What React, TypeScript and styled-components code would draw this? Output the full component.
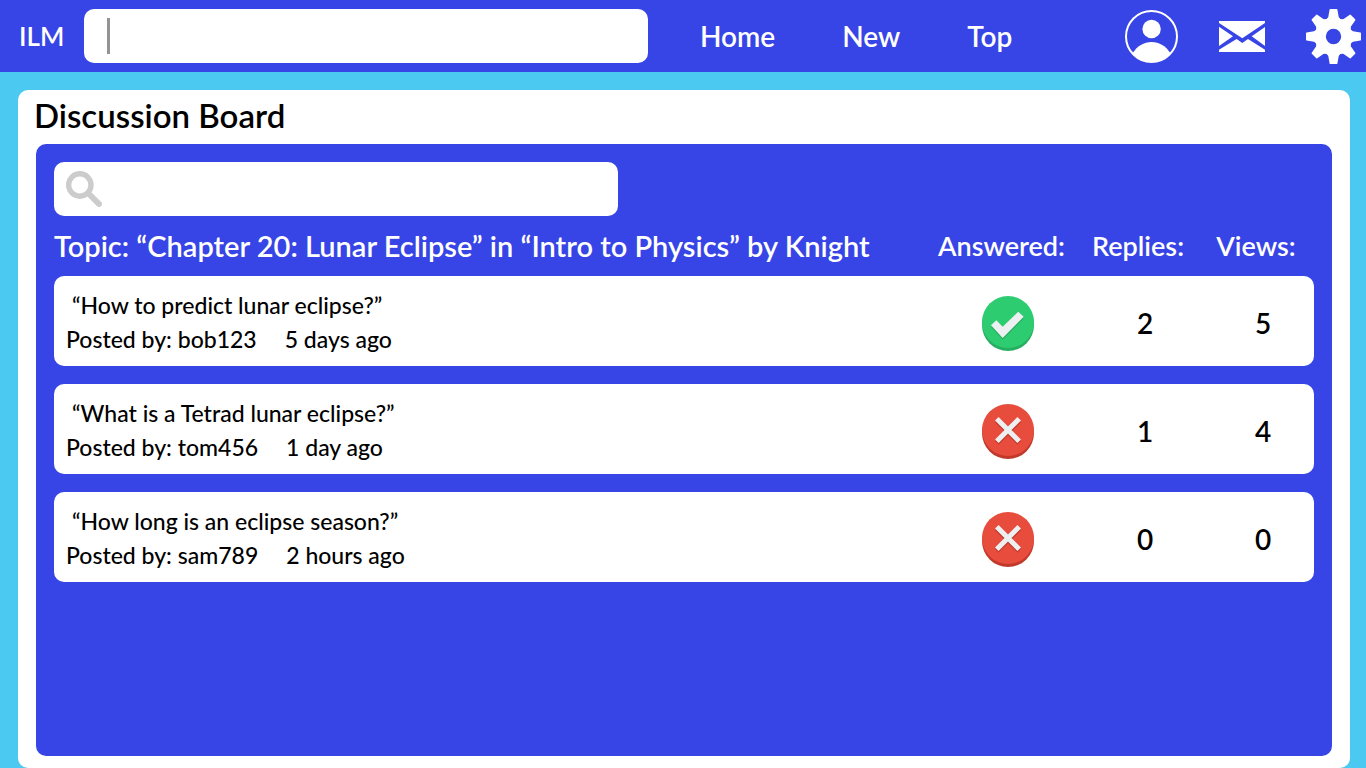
import React from "react";
import styled, { createGlobalStyle } from "styled-components";

const blue = "#3845e6";

const GlobalStyle = createGlobalStyle`
  * { box-sizing: border-box; }
  body {
    margin: 0;
    background: #4bc9f0;
    color: #000;
    font-family: Lato, "Noto Sans", sans-serif;
    font-weight: 500;
  }
`;

const Page = styled.div`
  min-height: 100vh;
  display: flex;
  flex-direction: column;
`;

const Header = styled.header`
  display: flex;
  align-items: center;
  height: 72px;
  padding: 0 5px 0 19px;
  background: ${blue};
  color: #fff;
`;

const Brand = styled.a`
  flex: 0 0 65px;
  color: inherit;
  font-size: 26px;
  font-weight: 600;
  line-height: 36px;
  text-decoration: none;
`;

const Field = styled.label<{ $inset: number }>`
  display: flex;
  align-items: center;
  flex: 0 1 564px;
  width: 100%;
  max-width: 564px;
  height: 54px;
  padding: 0 ${(p) => p.$inset}px;
  border-radius: 10px;
  background: #fff;
`;

const Caret = styled.span`
  width: 3px;
  height: 36px;
  background: #939393;
`;

const Input = styled.input`
  flex: 1;
  min-width: 0;
  height: 36px;
  margin-left: 8px;
  padding: 0;
  border: 0;
  outline: 0;
  background: transparent;
  color: #000;
  font: inherit;
  font-size: 23px;
`;

const Nav = styled.nav`
  display: flex;
  gap: 67px;
  margin-left: 52px;
`;

const NavLink = styled.a`
  color: inherit;
  font-size: 28px;
  font-weight: 600;
  line-height: 38px;
  text-decoration: none;
`;

const Actions = styled.div`
  display: flex;
  align-items: center;
  gap: 41px;
  margin-left: auto;
`;

const IconButton = styled.button`
  display: block;
  padding: 0;
  border: 0;
  background: none;
  color: inherit;
  cursor: pointer;

  svg { display: block; }
`;

const Board = styled.main`
  flex: 1;
  display: flex;
  flex-direction: column;
  margin: 18px 16px 0 18px;
  padding: 0 18px 12px;
  border-radius: 10px;
  background: #fff;
`;

const Title = styled.h1`
  margin: 0 -2px 4px;
  font-size: 33px;
  font-weight: 600;
  line-height: 50px;
`;

const Panel = styled.section`
  flex: 1;
  padding: 18px;
  border-radius: 10px;
  background: ${blue};
`;

const Topics = styled.table`
  width: 100%;
  table-layout: fixed;
  border-collapse: separate;
  border-spacing: 0 18px;
`;

const TopicHeading = styled.th`
  padding: 0;
  color: #fff;
  font-size: 29px;
  font-weight: 600;
  line-height: 24px;
  text-align: left;
  white-space: nowrap;
`;

const ColumnHeading = styled(TopicHeading)<{ $width: number }>`
  width: ${(p) => p.$width}px;
  padding-right: 14px;
  font-size: 27px;
  text-align: center;
`;

const Cell = styled.td`
  height: 90px;
  padding: 4px 0 0;
  background: #fff;
  font-size: 28px;
  font-weight: 600;
  line-height: 36px;
  text-align: center;
  vertical-align: middle;

  svg { display: block; margin: 0 auto; }

  &:last-child { border-radius: 0 10px 10px 0; }
`;

const QuestionCell = styled(Cell)`
  padding: 2px 12px 0;
  border-radius: 10px 0 0 10px;
  font-size: 23px;
  font-weight: 500;
  line-height: 34px;
  text-align: left;
`;

const Question = styled.a`
  display: block;
  padding-left: 6px;
  color: inherit;
  text-decoration: none;
`;

const Meta = styled.div`
  display: flex;
  gap: 28px;
`;

const UserIcon = () => (
  <svg width="53" height="53" viewBox="0 0 53 53" aria-hidden="true">
    <circle cx="26.5" cy="26.5" r="25.5" fill="none" stroke="#fff" strokeWidth="2" />
    <circle cx="26.6" cy="19" r="9.2" fill="#fff" />
    <path d="M7.4 43.4C12 36 19 31.9 26.6 31.9S41 36 45.6 43.4A25.5 25.5 0 0 1 7.4 43.4Z" fill="#fff" />
  </svg>
);

const MailIcon = () => (
  <svg width="46" height="31" viewBox="0 0 46 31" fill="#fff" aria-hidden="true">
    <path d="M0 0H46V2L23.3 17.3L0 2Z" />
    <path d="M0 5.8L14 15.3L0 25Z" />
    <path d="M46 6L32.7 15.3L46 25Z" />
    <path d="M0 28.8L17.6 18L23.3 22L29 18L46 28.8V31H0Z" />
  </svg>
);

const GearIcon = () => (
  <svg width="55" height="55" viewBox="-27.5 -27.5 55 55" aria-hidden="true">
    <circle r="13.3" fill="none" stroke="#fff" strokeWidth="11.2" />
    {[0, 45, 90, 135, 180, 225, 270, 315].map((angle) => (
      <path
        key={angle}
        d="M-7 -17L-5.2 -19.5L-3.9 -26.9Q-3.8 -27.5 -3.2 -27.5H3.2Q3.8 -27.5 3.9 -26.9L5.2 -19.5L7 -17Z"
        fill="#fff"
        transform={`rotate(${angle})`}
      />
    ))}
  </svg>
);

const SearchIcon = () => (
  <svg width="36" height="36" viewBox="0 0 36 36" fill="none" stroke="#ccc" aria-hidden="true">
    <circle cx="13.8" cy="14" r="11.2" strokeWidth="5.4" />
    <path d="M22.5 22.5L33 33" strokeWidth="6" strokeLinecap="round" />
  </svg>
);

const AnsweredIcon = () => (
  <svg width="52" height="55" viewBox="0 0 52 55" role="img" aria-label="Answered">
    <circle cx="26" cy="29" r="26" fill="#27ae60" />
    <circle cx="26" cy="26" r="26" fill="#2ecc71" />
    <path d="M9 31L14.3 26L20.7 32.4L36.3 17.4L41.7 22.4L20.7 43.7Z" fill="#27ae60" />
    <path d="M9 29.3L14.3 24.3L20.7 30.7L36.3 15.7L41.7 20.7L20.7 42Z" fill="#ecf0f1" />
  </svg>
);

const UnansweredIcon = () => (
  <svg width="52" height="55" viewBox="0 0 52 55" role="img" aria-label="Not answered">
    <circle cx="26" cy="29" r="26" fill="#c0392b" />
    <circle cx="26" cy="26" r="26" fill="#e74c3c" />
    <path d="M14.8 16.4L37.2 38.8M37.2 16.4L14.8 38.8" stroke="#c0392b" strokeWidth="5" />
    <path d="M14.8 14.8L37.2 37.2M37.2 14.8L14.8 37.2" stroke="#ecf0f1" strokeWidth="5" />
  </svg>
);

const posts = [
  { question: "“How to predict lunar eclipse?”", author: "bob123", age: "5 days ago", answered: true, replies: 2, views: 5 },
  { question: "“What is a Tetrad lunar eclipse?”", author: "tom456", age: "1 day ago", answered: false, replies: 1, views: 4 },
  { question: "“How long is an eclipse season?”", author: "sam789", age: "2 hours ago", answered: false, replies: 0, views: 0 },
];

export default function App() {
  return (
    <Page>
      <GlobalStyle />
      <Header>
        <Brand href="#">ILM</Brand>
        <Field $inset={23}>
          <Caret />
          <Input type="text" aria-label="Search ILM" />
        </Field>
        <Nav>
          <NavLink href="#home">Home</NavLink>
          <NavLink href="#new">New</NavLink>
          <NavLink href="#top">Top</NavLink>
        </Nav>
        <Actions>
          <IconButton type="button" aria-label="Profile"><UserIcon /></IconButton>
          <IconButton type="button" aria-label="Messages"><MailIcon /></IconButton>
          <IconButton type="button" aria-label="Settings"><GearIcon /></IconButton>
        </Actions>
      </Header>
      <Board>
        <Title>Discussion Board</Title>
        <Panel>
          <Field $inset={12}>
            <SearchIcon />
            <Input type="search" aria-label="Search discussions" />
          </Field>
          <Topics>
            <thead>
              <tr>
                <TopicHeading scope="col">
                  Topic: “Chapter 20: Lunar Eclipse” in “Intro to Physics” by Knight
                </TopicHeading>
                <ColumnHeading scope="col" $width={140}>Answered:</ColumnHeading>
                <ColumnHeading scope="col" $width={134}>Replies:</ColumnHeading>
                <ColumnHeading scope="col" $width={102}>Views:</ColumnHeading>
              </tr>
            </thead>
            <tbody>
              {posts.map((post) => (
                <tr key={post.author}>
                  <QuestionCell>
                    <Question href={`#${post.author}`}>{post.question}</Question>
                    <Meta>
                      <span>Posted by: {post.author}</span>
                      <span>{post.age}</span>
                    </Meta>
                  </QuestionCell>
                  <Cell>{post.answered ? <AnsweredIcon /> : <UnansweredIcon />}</Cell>
                  <Cell>{post.replies}</Cell>
                  <Cell>{post.views}</Cell>
                </tr>
              ))}
            </tbody>
          </Topics>
        </Panel>
      </Board>
    </Page>
  );
}
